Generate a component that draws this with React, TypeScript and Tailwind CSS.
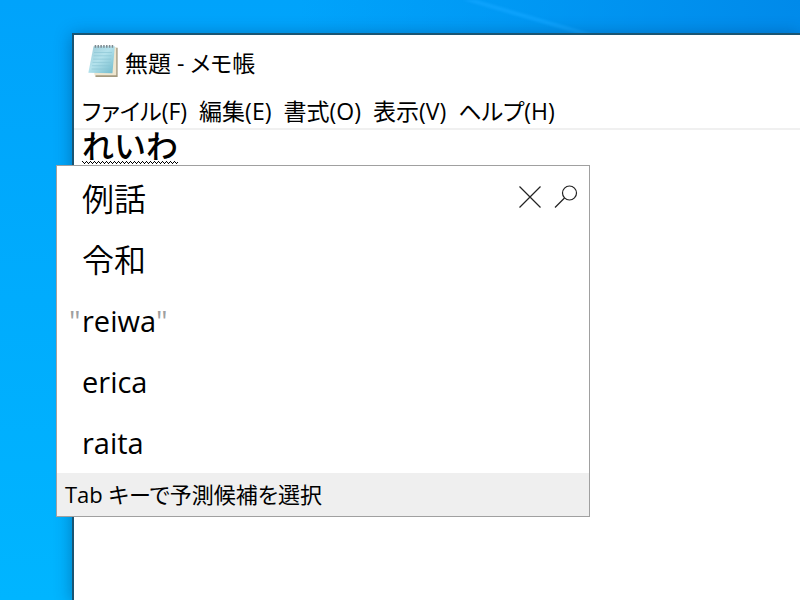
import { useState } from "react";

const menus = ["ファイル(F)", "編集(E)", "書式(O)", "表示(V)", "ヘルプ(H)"];

const candidates = [
	{ text: "例話", style: "text-[32px] font-[350]", quoted: false },
	{ text: "令和", style: "text-[32px] font-[350]", quoted: false },
	{ text: "reiwa", style: "text-[29px]", quoted: true },
	{ text: "erica", style: "text-[29px]", quoted: false },
	{ text: "raita", style: "text-[29px]", quoted: false },
];

function NotepadIcon() {
	return (
		<svg className="mb-1 h-[34px] w-8" viewBox="2 1 32 36" aria-hidden="true">
			<defs>
				<linearGradient id="page" x1="0" y1="0" x2="1" y2="1">
					<stop offset="0" stopColor="#9ccbd8" />
					<stop offset="0.45" stopColor="#b4e2ec" />
					<stop offset="1" stopColor="#6fb9cb" />
				</linearGradient>
			</defs>
			<path d="M30 5h3.500v31H10v-3z" fill="#a39a80" />
			<path d="M28 4.500h4V34H9v-2z" fill="#eee6cf" />
			<path d="M8 3.500h22.500L28 32 2.500 31.500z" fill="url(#page)" />
			<path
				d="M8.500 10h19M8 13.500h19M7.500 17h19M7 20.500h19M6.500 24h19M6 27.500h19"
				stroke="#8cc6d4"
				strokeWidth="0.700"
			/>
			<path
				d="M10 2v3M13 2v3M16 2v3M19 2v3M22 2v3M25 2v3M28 2v3"
				stroke="#7d8a90"
				strokeWidth="1.600"
			/>
		</svg>
	);
}

function CloseIcon() {
	return (
		<svg className="h-6 w-6" viewBox="0 0 24 24" fill="none" stroke="#222" strokeWidth="1.200">
			<path d="M1.500 1.500l21 21M22.500 1.500l-21 21" />
		</svg>
	);
}

function SearchIcon() {
	return (
		<svg className="h-6 w-6" viewBox="0 0 24 24" fill="none" stroke="#222" strokeWidth="1.200">
			<circle cx="15.500" cy="8" r="7" />
			<path d="M10.500 13L1 22.500" />
		</svg>
	);
}

function CandidateList() {
	return (
		<div className="absolute top-[165px] left-14 w-[534px] border border-[#a0a0a0] bg-white">
			<ul className="pt-[2px]">
				{candidates.map((item) => (
					<li key={item.text}>
						<button
							type="button"
							className="relative flex h-[61px] w-full items-center pl-[25px] text-left leading-10"
						>
							{item.quoted && (
								<span className="absolute left-3 text-[29px] text-[#a0a0a0]">"</span>
							)}
							<span className={item.style}>{item.text}</span>
							{item.quoted && (
								<span className="text-[29px] text-[#a0a0a0]">"</span>
							)}
						</button>
					</li>
				))}
			</ul>
			<div className="absolute top-[19px] right-[11px] flex gap-3">
				<button type="button" aria-label="閉じる">
					<CloseIcon />
				</button>
				<button type="button" aria-label="検索">
					<SearchIcon />
				</button>
			</div>
			<p className="bg-[#efefef] px-2 pt-[5px] pb-[6px] text-[22px] leading-8">
				Tab キーで予測候補を選択
			</p>
		</div>
	);
}

export default function App() {
	const [text, setText] = useState("れいわ");

	return (
		<main className="relative flex min-h-screen overflow-hidden bg-[radial-gradient(circle_at_100%_0,#008aea,transparent_500px),linear-gradient(#00a3fb,#00b5ff)] pt-[33px] pl-[72px] font-['Open_Sans','Noto_Sans_CJK_JP',sans-serif] text-black [font-feature-settings:'palt']">
			<svg
				className="absolute top-0 left-[460px] h-10 w-40 blur-[1px]"
				viewBox="0 0 160 40"
				aria-hidden="true"
			>
				<path d="M-4-4L140 38" stroke="#12a6ff" strokeWidth="4" opacity="0.700" />
			</svg>
			<section className="relative flex flex-1 flex-col border-t-2 border-l-2 border-[#1a5573] bg-white shadow-[0_2px_16px_rgba(0,40,90,0.4)]">
				<header className="flex h-14 items-center gap-[6px] pl-[13px]">
					<NotepadIcon />
					<h1 className="text-[23px] leading-8">無題 - メモ帳</h1>
				</header>
				<nav className="flex h-[39px] items-center gap-3 border-b-2 border-[#f0f0f0] pt-[3px] pl-2">
					{menus.map((menu) => (
						<button key={menu} type="button" className="text-[23px] leading-8">
							{menu}
						</button>
					))}
				</nav>
				<textarea
					aria-label="本文"
					spellCheck={false}
					value={text}
					onChange={(e) => setText(e.target.value)}
					className="flex-1 resize-none pl-2 text-[32px] leading-8 font-medium outline-none [font-feature-settings:normal]"
				/>
				{/* composition underline */}
				<svg
					className="absolute top-[126px] left-2 h-[3px] w-24"
					viewBox="0 0 96 3"
					shapeRendering="crispEdges"
					aria-hidden="true"
				>
					<defs>
						<pattern id="wave" width="4" height="3" patternUnits="userSpaceOnUse">
							<path d="M0 0h1v1h-1zM1 1h1v1h-1zM2 2h1v1h-1zM3 1h1v1h-1z" />
						</pattern>
					</defs>
					<rect width="96" height="3" fill="url(#wave)" />
				</svg>
			</section>
			<CandidateList />
		</main>
	);
}
